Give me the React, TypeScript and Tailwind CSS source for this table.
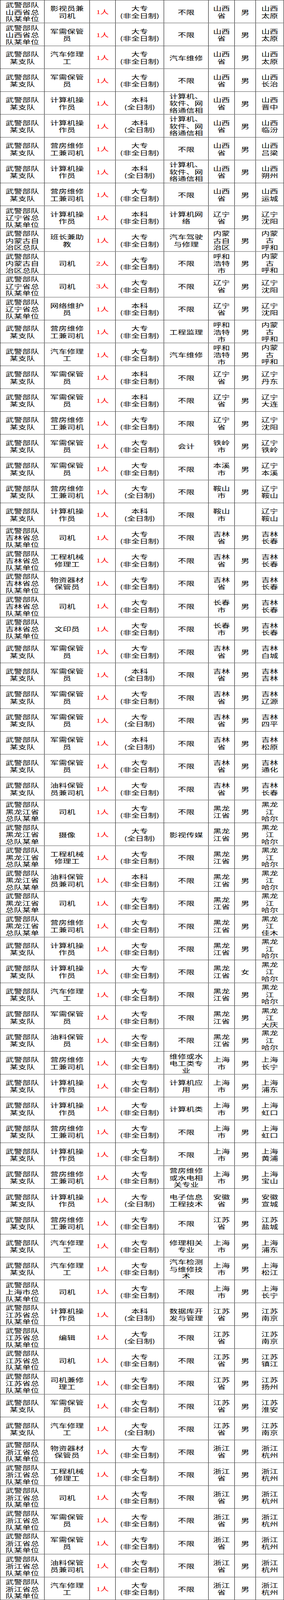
import React from 'react'

type Place = string | string[]
type Row = [string, string, number, number, string, string, string, Place]

const UNITS: Record<string, string> = {
  z: '武警部队某支队',
  sx: '武警部队山西省总队某单位',
  ln: '武警部队辽宁省总队某单位',
  nm: '武警部队内蒙古自治区总队',
  jl: '武警部队吉林省总队某单位',
  hl: '武警部队黑龙江省总队某单位',
  sh: '武警部队上海市总队某单位',
  js: '武警部队江苏省总队某单位',
  zj: '武警部队浙江省总队某单位',
}

const EDU: [string, string][] = [
  ['大专', '(非全日制)'],
  ['大专', '(全日制)'],
  ['本科', '(全日制)'],
  ['本科', '(非全日制)'],
]

const NET = '计算机、软件、网络通信相关专业'
const HRB = ['黑龙江', '哈尔滨']
const HHHT = ['内蒙古', '呼和浩特']

// unit, job, count, edu, major, origin, sex, place
const rows: Row[] = [
  ['sx', '影视员兼司机', 1, 0, '不限', '山西省', '男', '山西太原'],
  ['sx', '军需保管员', 1, 0, '不限', '山西省', '男', '山西太原'],
  ['z', '汽车修理工', 1, 0, '汽车维修', '山西省', '男', '山西太原'],
  ['z', '军需保管员', 1, 0, '不限', '山西省', '男', '山西长治'],
  ['z', '计算机操作员', 1, 2, NET, '山西省', '男', '山西晋中'],
  ['z', '计算机操作员', 1, 2, NET, '山西省', '男', '山西临汾'],
  ['z', '营房维修工兼司机', 1, 0, '不限', '山西省', '男', '山西吕梁'],
  ['z', '计算机操作员', 1, 2, NET, '山西省', '男', '山西朔州'],
  ['z', '营房维修工兼司机', 1, 0, '不限', '山西省', '男', '山西运城'],
  ['ln', '计算机操作员', 1, 3, '计算机网络', '辽宁省', '男', '辽宁沈阳'],
  ['nm', '班长兼助教', 1, 0, '汽车驾驶与修理', '内蒙古自治区', '男', HHHT],
  ['nm', '司机', 2, 0, '不限', '呼和浩特市', '男', HHHT],
  ['ln', '司机', 3, 0, '不限', '辽宁省', '男', '辽宁沈阳'],
  ['ln', '网络维护员', 1, 3, '不限', '辽宁省', '男', '辽宁沈阳'],
  ['z', '营房维修工兼司机', 1, 0, '工程监理', '呼和浩特市', '男', HHHT],
  ['z', '汽车修理工', 1, 0, '汽车维修', '呼和浩特市', '男', HHHT],
  ['z', '军需保管员', 1, 3, '不限', '辽宁省', '男', '辽宁丹东'],
  ['z', '军需保管员', 1, 3, '不限', '辽宁省', '男', '辽宁大连'],
  ['z', '营房维修工兼司机', 1, 0, '不限', '辽宁省', '男', '辽宁沈阳'],
  ['z', '军需保管员', 1, 0, '会计', '铁岭市', '男', '辽宁铁岭'],
  ['z', '军需保管员', 1, 0, '不限', '本溪市', '男', '辽宁本溪'],
  ['z', '营房维修工兼司机', 1, 1, '不限', '鞍山市', '男', '辽宁鞍山'],
  ['z', '计算机操作员', 1, 2, '不限', '鞍山市', '', '辽宁鞍山'],
  ['jl', '司机', 1, 0, '不限', '吉林省', '男', '吉林长春'],
  ['jl', '工程机械修理工', 1, 0, '不限', '吉林省', '男', '吉林长春'],
  ['jl', '物资器材保管员', 1, 0, '不限', '吉林省', '男', '吉林长春'],
  ['jl', '司机', 1, 0, '不限', '长春市', '男', '吉林长春'],
  ['jl', '文印员', 1, 0, '不限', '长春市', '男', '吉林长春'],
  ['z', '军需保管员', 1, 0, '不限', '吉林省', '男', '吉林白城'],
  ['z', '军需保管员', 1, 2, '不限', '吉林省', '男', '吉林吉林'],
  ['z', '军需保管员', 1, 0, '不限', '吉林省', '男', '吉林辽源'],
  ['z', '军需保管员', 1, 1, '不限', '吉林省', '男', '吉林四平'],
  ['z', '军需保管员', 1, 2, '不限', '吉林省', '男', '吉林松原'],
  ['z', '军需保管员', 1, 0, '不限', '吉林省', '男', '吉林通化'],
  ['z', '油料保管员兼司机', 1, 0, '不限', '吉林省', '男', '吉林长春'],
  ['hl', '司机', 1, 0, '不限', '黑龙江省', '男', HRB],
  ['hl', '摄像', 1, 1, '影视传媒', '黑龙江省', '男', HRB],
  ['hl', '工程机械修理工', 1, 0, '不限', '黑龙江省', '男', HRB],
  ['hl', '油料保管员兼司机', 1, 3, '不限', '黑龙江省', '男', HRB],
  ['hl', '司机', 1, 0, '不限', '黑龙江省', '男', HRB],
  ['hl', '营房维修工兼司机', 1, 0, '不限', '黑龙江省', '男', ['黑龙江', '佳木斯']],
  ['z', '计算机操作员', 1, 0, '不限', '黑龙江省', '男', HRB],
  ['z', '计算机操作员', 1, 0, '不限', '黑龙江省', '女', HRB],
  ['z', '汽车修理工', 1, 0, '不限', '黑龙江省', '男', HRB],
  ['z', '军需保管员', 1, 0, '不限', '黑龙江省', '男', ['黑龙江', '大庆']],
  ['z', '油料保管员', 1, 0, '不限', '黑龙江省', '男', HRB],
  ['z', '营房维修工兼司机', 1, 0, '维修或水电工类专业', '上海市', '男', '上海长宁'],
  ['z', '计算机操作员', 1, 0, '计算机应用', '上海市', '男', '上海浦东'],
  ['z', '计算机操作员', 1, 0, '计算机类', '上海市', '男', '上海虹口'],
  ['z', '营房维修工兼司机', 1, 0, '不限', '上海市', '男', '上海虹口'],
  ['z', '计算机操作员', 1, 0, '不限', '上海市', '男', '上海黄浦'],
  ['z', '营房维修工兼司机', 1, 0, '营房维修或水电相关专业', '上海市', '男', '上海宝山'],
  ['z', '计算机操作员', 1, 1, '电子信息工程技术', '安徽省', '男', '安徽宣城'],
  ['z', '营房维修工兼司机', 1, 0, '不限', '江苏省', '男', '江苏盐城'],
  ['z', '汽车修理工', 1, 0, '修理相关专业', '上海市', '男', '上海浦东'],
  ['z', '汽车修理工', 1, 0, '汽车检测与维修技术', '上海市', '男', '上海松江'],
  ['sh', '司机', 1, 0, '不限', '上海市', '男', '上海长宁'],
  ['js', '计算机操作员', 1, 2, '数据库开发与管理', '江苏省', '男', '江苏南京'],
  ['js', '编辑', 1, 1, '不限', '江苏省', '', '江苏南京'],
  ['js', '司机', 1, 0, '不限', '江苏省', '男', '江苏镇江'],
  ['js', '司机兼修理工', 1, 0, '不限', '江苏省', '男', '江苏扬州'],
  ['z', '军需保管员', 1, 0, '不限', '江苏省', '男', '江苏淮安'],
  ['z', '汽车修理工', 1, 1, '不限', '江苏省', '男', '江苏南京'],
  ['zj', '物资器材保管员', 1, 0, '不限', '浙江省', '男', '浙江杭州'],
  ['zj', '工程机械修理工', 1, 0, '不限', '浙江省', '男', '浙江杭州'],
  ['zj', '司机', 1, 0, '不限', '浙江省', '男', '浙江杭州'],
  ['zj', '军需保管员', 1, 0, '不限', '浙江省', '男', '浙江杭州'],
  ['zj', '军需保管员', 1, 0, '不限', '浙江省', '男', '浙江杭州'],
  ['zj', '油料保管员兼司机', 1, 0, '不限', '浙江省', '男', '浙江杭州'],
  ['zj', '汽车修理工', 1, 0, '不限', '浙江省', '男', '浙江杭州'],
]

// auto margins keep short text centred; long text starts at the top and is clipped
function Cell({ w, children }: { w: string; children: React.ReactNode }) {
  return (
    <div className={`${w} flex h-full shrink-0 flex-col overflow-hidden border-r border-black px-[6px] pt-[3px]`}>
      <div className="my-auto text-center">{children}</div>
    </div>
  )
}

export default function App() {
  // the sheet is drawn at full size and squeezed vertically to fit the 4096px capture
  return (
    <div className="h-[4096px] w-[727px] overflow-hidden bg-white">
      <div className="origin-top scale-y-[0.6803] border-t border-l border-black text-[21.5px] leading-[26.7px] text-black font-['Noto_Sans_CJK_SC','Liberation_Serif',sans-serif]">
        {rows.map(([unit, job, count, edu, major, origin, sex, place], i) => (
          <div key={i} className="flex h-[86px] overflow-hidden border-b border-black">
            <Cell w="w-[113px]">{UNITS[unit]}</Cell>
            <Cell w="w-[116px]">{job}</Cell>
            <Cell w="w-[66px]">
              <span className="whitespace-nowrap text-[#ff0000]">
                <span className="font-['Liberation_Serif',serif]">{count}</span>人
              </span>
            </Cell>
            <Cell w="w-[124px]">
              <div className="whitespace-nowrap">{EDU[edu][0]}</div>
              <div className="whitespace-nowrap">{EDU[edu][1]}</div>
            </Cell>
            <Cell w="w-[114px]">{major}</Cell>
            <Cell w="w-[67px]">{origin}</Cell>
            <Cell w="w-[54px]">{sex}</Cell>
            <Cell w="w-[72px]">
              {Array.isArray(place) ? place.map((p) => <div key={p}>{p}</div>) : place}
            </Cell>
          </div>
        ))}
      </div>
    </div>
  )
}
